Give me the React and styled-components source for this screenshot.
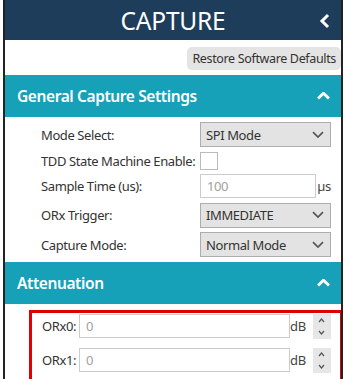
import React from "react";
import styled, { createGlobalStyle } from "styled-components";

const Global = createGlobalStyle`
  html, body { margin: 0; padding: 0; background: #fff; }
  body { font-family: "Noto Sans", "Open Sans", sans-serif; color: #333; }
`;

const Panel = styled.div`
  margin-left: 3px;
  width: 336px;
  border-left: 2px solid #222;
  border-right: 2px solid #222;
  height: 379px;
  overflow: hidden;
  background: #fff;
`;

const TopBar = styled.div`
  height: 40px;
  background: #1e3d5b;
  display: flex;
  align-items: center;
  justify-content: center;
  position: relative;
  color: #fff;
  font-size: 24.5px;
  letter-spacing: -0.2px;
`;

const BackIcon = styled.svg`
  position: absolute;
  right: 11px;
  top: 13px;
`;

const RestoreRow = styled.div`
  height: 35px;
  display: flex;
  align-items: center;
  justify-content: flex-end;
  padding-right: 0;
`;

const RestoreButton = styled.button`
  height: 23px;
  padding: 0 5px;
  border: none;
  border-radius: 5px;
  background: #e4e4e4;
  color: #333;
  font-family: "Noto Sans", sans-serif;
  font-size: 12.5px;
  letter-spacing: -0.35px;
  margin-top: 2px;
`;

const SectionHeader = styled.div`
  height: 42px;
  background: #16a1b9;
  color: #fff;
  display: flex;
  align-items: center;
  justify-content: space-between;
  padding: 0 11px 0 12px;
  font-size: 15.5px;
  letter-spacing: -0.4px;
  font-weight: 600;
`;

const FormGrid = styled.div`
  display: grid;
  grid-template-columns: 159px 131px;
  grid-template-rows: 25px 18px 24px 25px 25px;
  row-gap: 4.5px;
  padding: 5px 0 5px 36px;
  align-items: center;
`;

const Row = styled.div`
  display: contents;
`;

const Label = styled.div`
  font-size: 13px;
  letter-spacing: -0.4px;
  color: #333;
  white-space: nowrap;
`;

const Select = styled.div`
  height: 23px;
  border: 1px solid #adadad;
  background: #e3e3e3;
  display: flex;
  align-items: center;
  justify-content: space-between;
  padding: 0 6px 0 5px;
  font-size: 13px;
  letter-spacing: -0.4px;
  color: #333;
`;

const Check = styled.div`
  width: 16px;
  height: 16px;
  border: 1px solid #bbb;
  background: #fff;
`;

const InputWrap = styled.div`
  display: flex;
  align-items: center;
  justify-content: space-between;
  height: 24px;
`;

const TextBox = styled.div`
  width: ${(p) => p.$w}px;
  height: ${(p) => p.$h}px;
  border: 1px solid #ccc;
  background: #fff;
  color: #a0a0a0;
  font-size: 13px;
  letter-spacing: -0.4px;
  display: flex;
  align-items: center;
  padding-left: 6px;
  box-sizing: border-box;
`;

const Unit = styled.span`
  font-size: 13px;
  letter-spacing: -0.3px;
  color: #444;
  margin-right: ${(p) => p.$mr || 0}px;
`;

const Highlight = styled.div`
  margin: 6px -2px 0 24px;
  border: 3px solid #e00000;
  height: 120px;
  padding: 1px 0 0 10px;
  display: flex;
  flex-direction: column;
  gap: 10px;
`;

const AttRow = styled.div`
  display: flex;
  align-items: center;
  height: 24px;
`;

const AttLabel = styled.span`
  font-size: 13px;
  letter-spacing: -0.4px;
  color: #333;
  width: 37px;
`;

const Spinner = styled.div`
  width: 18px;
  height: 25px;
  background: #e6e6e6;
  margin-left: 7px;
  display: flex;
  flex-direction: column;
  align-items: center;
  justify-content: space-between;
  padding: 4px 0;
  box-sizing: border-box;
`;

const Chevron = ({ dir = "down", color = "#555", w = 12, sw = 1.6 }) => (
  <svg width={w} height={w * 0.6} viewBox="0 0 12 7">
    <path
      d={dir === "down" ? "M1 1 L6 6 L11 1" : "M1 6 L6 1 L11 6"}
      fill="none"
      stroke={color}
      strokeWidth={sw}
    />
  </svg>
);

const MiniChevron = ({ dir }) => (
  <svg width="7" height="5" viewBox="0 0 7 5">
    <path
      d={dir === "down" ? "M1 1 L3.5 4 L6 1" : "M1 4 L3.5 1 L6 4"}
      fill="none"
      stroke="#555"
      strokeWidth="1.2"
    />
  </svg>
);

export default function App() {
  return (
    <>
      <Global />
      <Panel>
        <TopBar>
          CAPTURE
          <BackIcon width="11" height="16" viewBox="0 0 11 16">
            <path d="M9 2 L3 8 L9 14" fill="none" stroke="#fff" strokeWidth="3" />
          </BackIcon>
        </TopBar>
        <RestoreRow>
          <RestoreButton>Restore Software Defaults</RestoreButton>
        </RestoreRow>
        <SectionHeader>
          General Capture Settings
          <Chevron dir="up" color="#fff" w={13} sw={2.6} />
        </SectionHeader>
        <FormGrid>
          <Row>
            <Label>Mode Select:</Label>
            <Select>
              SPI Mode
              <Chevron />
            </Select>
          </Row>
          <Row>
            <Label>TDD State Machine Enable:</Label>
            <Check />
          </Row>
          <Row>
            <Label>Sample Time (us):</Label>
            <InputWrap>
              <TextBox $w={116} $h={24}>100</TextBox>
              <Unit>µs</Unit>
            </InputWrap>
          </Row>
          <Row>
            <Label>ORx Trigger:</Label>
            <Select>
              IMMEDIATE
              <Chevron />
            </Select>
          </Row>
          <Row>
            <Label>Capture Mode:</Label>
            <Select>
              Normal Mode
              <Chevron />
            </Select>
          </Row>
        </FormGrid>
        <SectionHeader>
          Attenuation
          <Chevron dir="up" color="#fff" w={13} sw={2.6} />
        </SectionHeader>
        <Highlight>
          <AttRow>
            <AttLabel>ORx0:</AttLabel>
            <TextBox $w={211} $h={24}>0</TextBox>
            <Unit>dB</Unit>
            <Spinner>
              <MiniChevron dir="up" />
              <MiniChevron dir="down" />
            </Spinner>
          </AttRow>
          <AttRow>
            <AttLabel>ORx1:</AttLabel>
            <TextBox $w={211} $h={24}>0</TextBox>
            <Unit>dB</Unit>
            <Spinner>
              <MiniChevron dir="up" />
              <MiniChevron dir="down" />
            </Spinner>
          </AttRow>
        </Highlight>
      </Panel>
    </>
  );
}
